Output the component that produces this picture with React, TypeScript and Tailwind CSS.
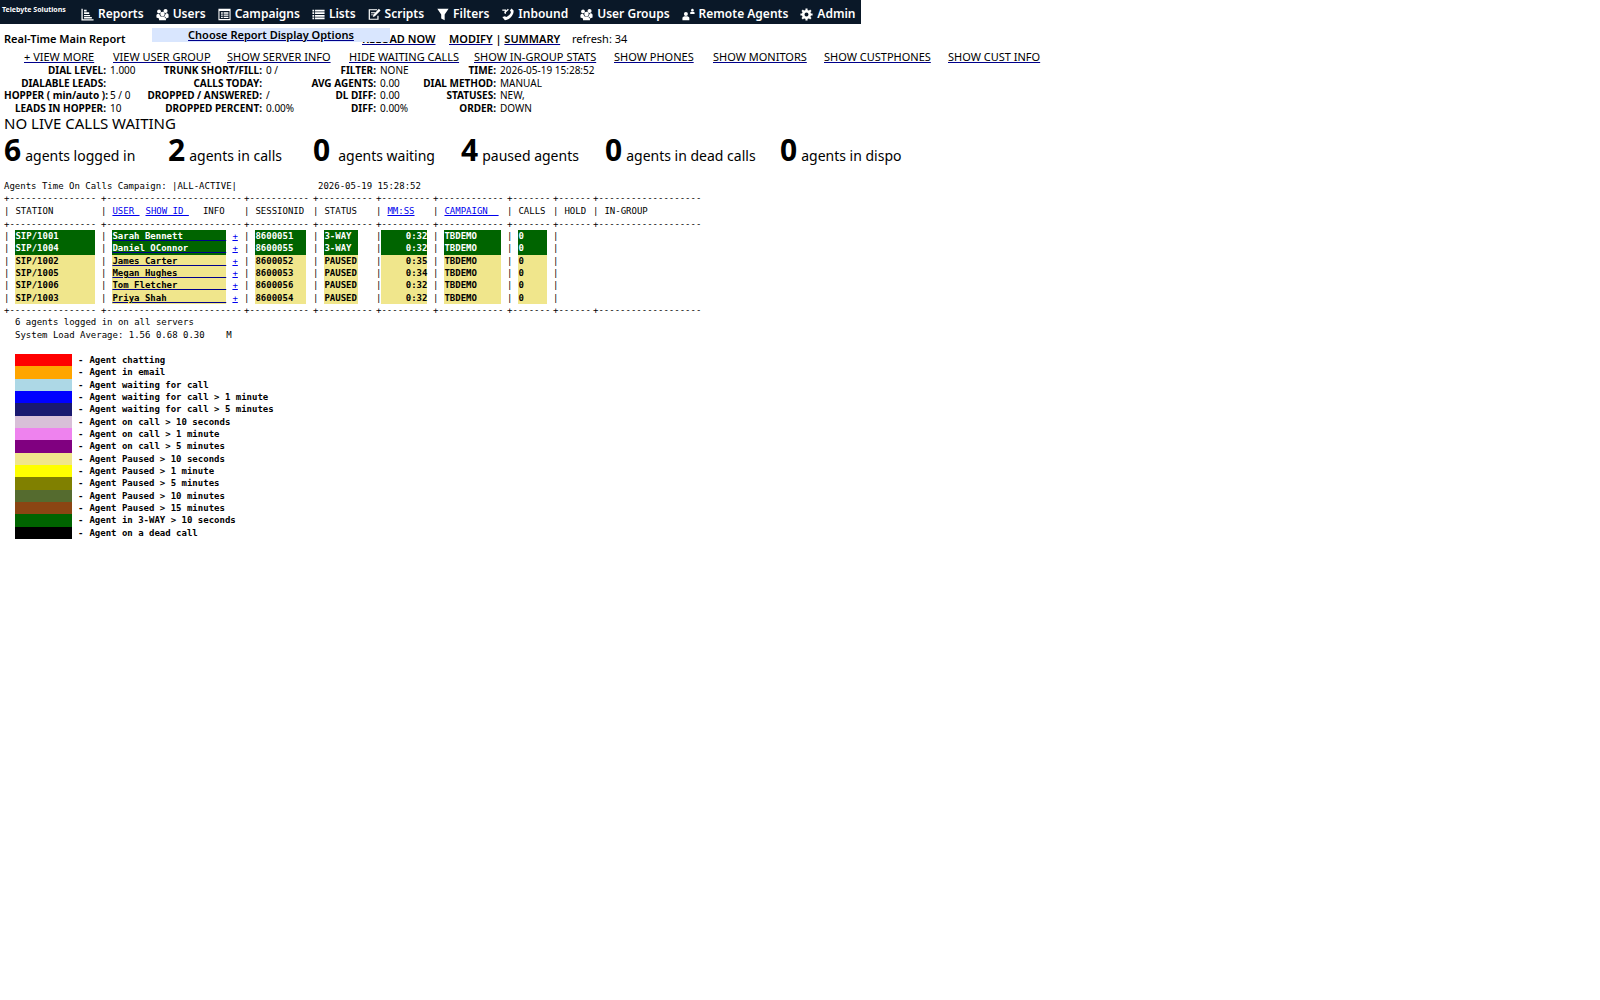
import { Fragment } from "react";
import type { ReactNode } from "react";

const navItems: { label: string; icon: ReactNode }[] = [
  {
    label: "Reports",
    icon: <path d="M0 1h1.500v12h12.500v1.500H0zM3 2h3v2H3zM3 5h6v2H3zM3 8h7v1.500H3zM3 10.500h9V12H3z" />,
  },
  {
    label: "Users",
    icon: <UsersShape />,
  },
  {
    label: "Campaigns",
    icon: (
      <path
        fillRule="evenodd"
        d="M0 1h14v13H0zM1.200 3.500v9.300h11.600V3.500zM3 5h2v1.500H3zM6 5h5.500v1.500H6zM3 7.500h2V9H3zM6 7.500h5.500V9H6zM3 10h2v1.500H3zM6 10h5.500v1.500H6z"
      />
    ),
  },
  {
    label: "Lists",
    icon: (
      <path d="M0 2h2v2H0zM3 2h11v2H3zM0 5h2v2H0zM3 5h11v2H3zM0 8h2v2H0zM3 8h11v2H3zM0 11h2v2H0zM3 11h11v2H3z" />
    ),
  },
  {
    label: "Scripts",
    icon: (
      <>
        <path d="M10 2H1v11h10V9" fill="none" stroke="currentColor" strokeWidth="1.400" />
        <path d="M3 5h5v1H3zM3 7.500h3v1H3zM12 1l2 2-6.500 6.500L5 10.500l.8-2.700z" />
      </>
    ),
  },
  {
    label: "Filters",
    icon: <path d="M1 1h13L9.500 7.500V14L5.500 12V7.500z" />,
  },
  {
    label: "Inbound",
    icon: (
      <>
        <path d="M1 10.500l3-1 1.500 1C8 9.500 10.500 7 11 4.500L9.800 3l1.800-2.500L14 3c.5 5-5 11-10 11z" />
        <path d="M8 1.500L3.500 5.500M1 2.500h3.500v4" fill="none" stroke="currentColor" strokeWidth="1.600" />
      </>
    ),
  },
  {
    label: "User Groups",
    icon: <UsersShape />,
  },
  {
    label: "Remote Agents",
    icon: (
      <>
        <circle cx="4" cy="7" r="2.300" />
        <path d="M0 14v-2.500C0 10 1.500 9.500 4 9.500s4 .5 4 2V14z" />
        <circle cx="11.500" cy="2.500" r="1.500" />
        <path d="M9 7V5.500c0-1 1-1.300 2.500-1.300S14 4.500 14 5.500V7z" />
      </>
    ),
  },
  {
    label: "Admin",
    icon: (
      <>
        <circle cx="7" cy="7.500" r="3.800" fill="none" stroke="currentColor" strokeWidth="3" />
        <path
          d="M7 .5v3M7 11.500v3M0 7.500h3M11 7.500h3M2 2.500l2 2M10 10.500l2 2M12 2.500l-2 2M4 10.500l-2 2"
          fill="none"
          stroke="currentColor"
          strokeWidth="2.400"
        />
      </>
    ),
  },
];

const toggles = [
  { label: "+ VIEW MORE", width: "w-[89px]" },
  { label: "VIEW USER GROUP", width: "w-[114px]" },
  { label: "SHOW SERVER INFO", width: "w-[122px]" },
  { label: "HIDE WAITING CALLS", width: "w-[125px]" },
  { label: "SHOW IN-GROUP STATS", width: "w-[140px]" },
  { label: "SHOW PHONES", width: "w-[99px]" },
  { label: "SHOW MONITORS", width: "w-[111px]" },
  { label: "SHOW CUSTPHONES", width: "w-[124px]" },
  { label: "SHOW CUST INFO", width: "w-[90px]" },
];

const stats = [
  [["DIAL LEVEL:", "1.000"], ["TRUNK SHORT/FILL:", "0 /"], ["FILTER:", "NONE"], ["TIME:", "2026-05-19 15:28:52"]],
  [["DIALABLE LEADS:", ""], ["CALLS TODAY:", ""], ["AVG AGENTS:", "0.00"], ["DIAL METHOD:", "MANUAL"]],
  [["HOPPER ( min/auto ):", "5 / 0"], ["DROPPED / ANSWERED:", "/"], ["DL DIFF:", "0.00"], ["STATUSES:", "NEW,"]],
  [["LEADS IN HOPPER:", "10"], ["DROPPED PERCENT:", "0.00%"], ["DIFF:", "0.00%"], ["ORDER:", "DOWN"]],
];

const totals = [
  { count: 6, label: "agents logged in", width: "w-[164px]", gap: "gap-1" },
  { count: 2, label: "agents in calls", width: "w-[145px]", gap: "gap-1" },
  { count: 0, label: "agents waiting", width: "w-[148px]", gap: "gap-2" },
  { count: 4, label: "paused agents", width: "w-[144px]", gap: "gap-1" },
  { count: 0, label: "agents in dead calls", width: "w-[175px]", gap: "gap-1" },
  { count: 0, label: "agents in dispo", width: "w-[140px]", gap: "gap-1" },
];

const agents = [
  { station: "SIP/1001", user: "Sarah Bennett", session: "8600051", status: "3-WAY", time: "0:32" },
  { station: "SIP/1004", user: "Daniel OConnor", session: "8600055", status: "3-WAY", time: "0:32" },
  { station: "SIP/1002", user: "James Carter", session: "8600052", status: "PAUSED", time: "0:35" },
  { station: "SIP/1005", user: "Megan Hughes", session: "8600053", status: "PAUSED", time: "0:34" },
  { station: "SIP/1006", user: "Tom Fletcher", session: "8600056", status: "PAUSED", time: "0:32" },
  { station: "SIP/1003", user: "Priya Shah", session: "8600054", status: "PAUSED", time: "0:32" },
];

const legend = [
  { color: "bg-[#ff0000]", label: "Agent chatting" },
  { color: "bg-[#ffa500]", label: "Agent in email" },
  { color: "bg-[#add8e6]", label: "Agent waiting for call" },
  { color: "bg-[#0000ff]", label: "Agent waiting for call > 1 minute" },
  { color: "bg-[#191970]", label: "Agent waiting for call > 5 minutes" },
  { color: "bg-[#d8bfd8]", label: "Agent on call > 10 seconds" },
  { color: "bg-[#ee82ee]", label: "Agent on call > 1 minute" },
  { color: "bg-[#800080]", label: "Agent on call > 5 minutes" },
  { color: "bg-[#f0e68c]", label: "Agent Paused > 10 seconds" },
  { color: "bg-[#ffff00]", label: "Agent Paused > 1 minute" },
  { color: "bg-[#808000]", label: "Agent Paused > 5 minutes" },
  { color: "bg-[#556b2f]", label: "Agent Paused > 10 minutes" },
  { color: "bg-[#8b4513]", label: "Agent Paused > 15 minutes" },
  { color: "bg-[#006400]", label: "Agent in 3-WAY > 10 seconds" },
  { color: "bg-[#000000]", label: "Agent on a dead call" },
];

// dashes that follow the "+" in each column of the agent table
const dashes = [16, 25, 11, 10, 9, 12, 7, 6, 19];

function UsersShape() {
  return (
    <>
      <circle cx="3" cy="4" r="2.200" />
      <circle cx="10.500" cy="3.500" r="2.400" />
      <circle cx="7" cy="7" r="2.600" />
      <path d="M0 11V8.500C0 7 1 6.500 3 6.500l2 4-2 1.500zM14 11V8c0-1.500-1-2-3-2l-2 4 2 2zM3 14v-2.500C3 10 4.500 9.700 7 9.700s4 .3 4 1.800V14z" />
    </>
  );
}

function Rule() {
  return (
    <tr aria-hidden="true">
      {dashes.map((n, i) => (
        <td key={i}>{"+" + "-".repeat(n)}</td>
      ))}
    </tr>
  );
}

function Bar({ children, tight }: { children?: ReactNode; tight?: boolean }) {
  return (
    <div className={tight ? "flex" : "flex gap-[6px]"}>
      <span>|</span>
      {children}
    </div>
  );
}

export default function App() {
  const link = "underline decoration-[#00008b]";
  const blue = "text-[#0000ee] underline";

  return (
    <div className="bg-white font-['Noto_Sans',sans-serif] text-black">
      <nav className="flex h-6 w-fit items-center gap-3 bg-[#0a1828] pr-[6px] text-white">
        <a href="#" className="w-[69px] pb-1 pl-[2px] text-[7px] font-bold whitespace-nowrap">
          Telebyte Solutions
        </a>
        {navItems.map((item) => (
          <a key={item.label} href="#" className="flex items-center gap-1 pt-1 text-[12px] font-semibold whitespace-nowrap">
            <svg viewBox="0 0 14 15" className="h-[13px] w-[13px]" fill="currentColor" aria-hidden="true">
              {item.icon}
            </svg>
            {item.label}
          </a>
        ))}
      </nav>

      <main className="pl-1">
        <header className="relative flex h-[26px] items-center pt-1 text-[11px] whitespace-nowrap">
          <h1 className="w-[358px] font-semibold">Real-Time Main Report</h1>
          <a href="#" className={`${link} w-[87px] font-semibold`}>
            RELOAD NOW
          </a>
          <span className="w-[123px] font-semibold">
            <a href="#" className={link}>
              MODIFY
            </a>
            {" | "}
            <a href="#" className={link}>
              SUMMARY
            </a>
          </span>
          <span>refresh: 34</span>
          <div className="absolute top-1 left-[148px] flex h-[14px] w-[238px] items-center justify-center bg-[#d9e6fe] font-semibold">
            <a href="#" className={link}>
              Choose Report Display Options
            </a>
          </div>
        </header>

        <div className="flex h-[14px] items-center pl-5 text-[11px] whitespace-nowrap">
          {toggles.map((t) => (
            <div key={t.label} className={t.width}>
              <a href="#" className={link}>
                {t.label}
              </a>
            </div>
          ))}
        </div>

        <table className="h-[50px] w-[596px] table-fixed text-[10px] leading-[12px] whitespace-nowrap">
          <colgroup>
            <col className="w-[102px]" />
            <col className="w-[34px]" />
            <col className="w-[122px]" />
            <col className="w-[43px]" />
            <col className="w-[71px]" />
            <col className="w-[44px]" />
            <col className="w-[76px]" />
            <col />
          </colgroup>
          <tbody>
            {stats.map((row, i) => (
              <tr key={i}>
                {row.map(([label, value]) => (
                  <Fragment key={label}>
                    <th className="p-0 text-right font-bold">{label}</th>
                    <td className="p-0 pl-1">{value}</td>
                  </Fragment>
                ))}
              </tr>
            ))}
          </tbody>
        </table>

        <p className="text-[15px] leading-[18px]">NO LIVE CALLS WAITING</p>

        <div className="flex h-12 items-center pb-3 whitespace-nowrap">
          {totals.map((t) => (
            <div key={t.label} className={`flex items-baseline ${t.width} ${t.gap}`}>
              <span className="text-[30px] leading-[36px] font-bold">{t.count}</span>
              <span className="text-[14px]">{t.label}</span>
            </div>
          ))}
        </div>

        <section className="font-['DejaVu_Sans_Mono',monospace] text-[9px] leading-[12px] whitespace-pre">
          <div className="flex">
            <h2 className="w-[314px]">Agents Time On Calls Campaign: |ALL-ACTIVE|</h2>
            <time>2026-05-19 15:28:52</time>
          </div>
          <table className="w-[702px] table-fixed">
            <colgroup>
              <col className="w-[97px]" />
              <col className="w-[143px]" />
              <col className="w-[69px]" />
              <col className="w-[63px]" />
              <col className="w-[57px]" />
              <col className="w-[74px]" />
              <col className="w-[46px]" />
              <col className="w-[40px]" />
              <col />
            </colgroup>
            <thead className="text-left">
              <Rule />
              <tr className="leading-[14px]">
                <th className="font-normal"><Bar>STATION</Bar></th>
                <th className="font-normal">
                  <Bar>
                    <a href="#" className={blue}>{"USER "}</a>
                    <a href="#" className={blue}>{"SHOW ID "}</a>
                    <span className="pl-2">INFO</span>
                  </Bar>
                </th>
                <th className="font-normal"><Bar>SESSIONID</Bar></th>
                <th className="font-normal"><Bar>STATUS</Bar></th>
                <th className="font-normal"><Bar><a href="#" className={blue}>MM:SS</a></Bar></th>
                <th className="font-normal"><Bar><a href="#" className={blue}>{"CAMPAIGN  "}</a></Bar></th>
                <th className="font-normal"><Bar>CALLS</Bar></th>
                <th className="font-normal"><Bar>HOLD</Bar></th>
                <th className="font-normal"><Bar>IN-GROUP</Bar></th>
              </tr>
              <Rule />
            </thead>
            <tbody>
              {agents.map((a) => {
                const cell = a.status === "3-WAY" ? "bg-[#006400] font-bold text-white" : "bg-[#f0e68c] font-bold";
                return (
                  <tr key={a.station} className="nth-[3n+2]:leading-[13px]">
                    <td><Bar><span className={`${cell} w-20`}>{a.station}</span></Bar></td>
                    <td>
                      <Bar>
                        <a href="#" className={`${cell} ${link} w-[114px]`}>{a.user.padEnd(21)}</a>
                        <a href="#" className={blue}>+</a>
                      </Bar>
                    </td>
                    <td><Bar><span className={`${cell} w-[51px]`}>{a.session}</span></Bar></td>
                    <td><Bar><span className={`${cell} w-[34px]`}>{a.status}</span></Bar></td>
                    <td><Bar tight><span className={`${cell} w-[46px] text-right`}>{a.time}</span></Bar></td>
                    <td><Bar><span className={`${cell} w-[57px]`}>TBDEMO</span></Bar></td>
                    <td><Bar><span className={`${cell} w-[29px]`}>0</span></Bar></td>
                    <td><Bar /></td>
                    <td />
                  </tr>
                );
              })}
            </tbody>
            <tfoot>
              <Rule />
            </tfoot>
          </table>
          <p className="pl-[11px]">6 agents logged in on all servers</p>
          <p className="pl-[11px] leading-[14px]">System Load Average: 1.56 0.68 0.30    M</p>
          <ul className="pt-3 pl-[11px] font-bold">
            {legend.map((item) => (
              <li key={item.label} className="flex gap-[6px] nth-[3n+2]:leading-[13px]">
                <span className={`w-[57px] ${item.color}`} />
                <span>-</span>
                <span>{item.label}</span>
              </li>
            ))}
          </ul>
        </section>
      </main>
    </div>
  );
}
